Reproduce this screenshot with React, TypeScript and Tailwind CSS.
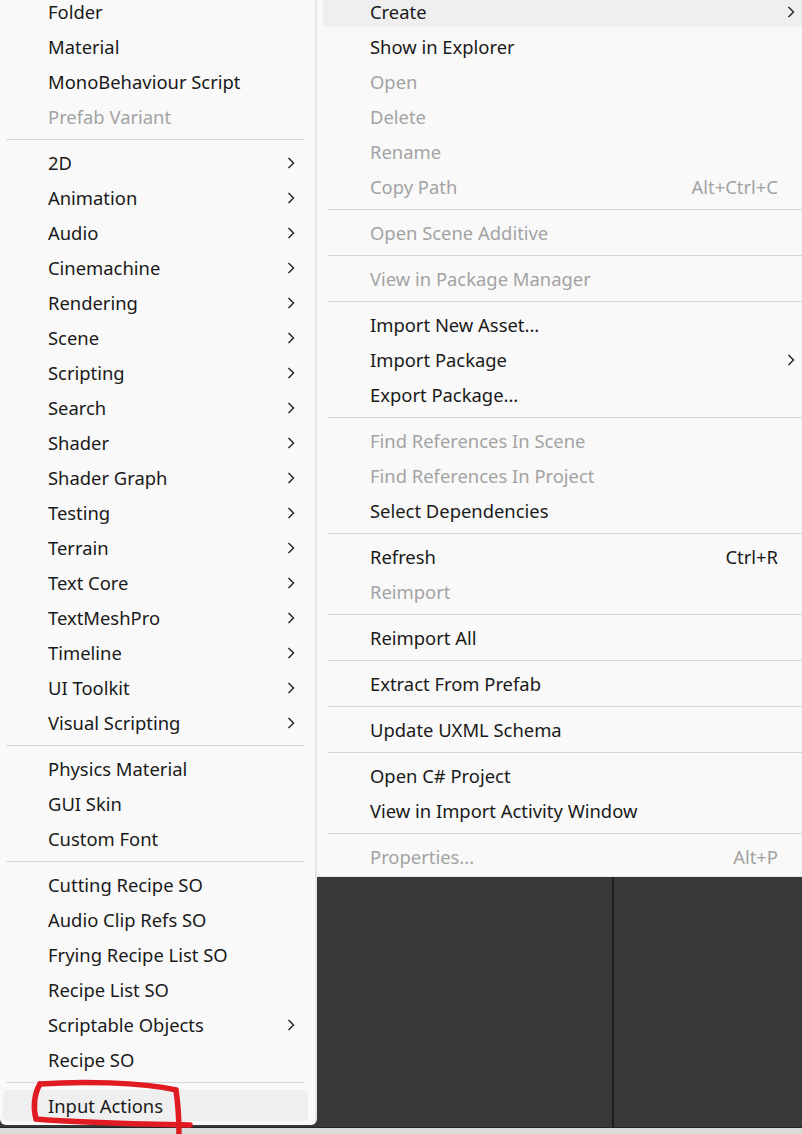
import type { ReactNode } from 'react';

type Item =
  | { sep: true }
  | { label: string; disabled?: boolean; sub?: boolean; shortcut?: string; active?: boolean };

const S: Item = { sep: true };

const LEFT: Item[] = [
  { label: 'Folder' },
  { label: 'Material' },
  { label: 'MonoBehaviour Script' },
  { label: 'Prefab Variant', disabled: true },
  S,
  { label: '2D', sub: true },
  { label: 'Animation', sub: true },
  { label: 'Audio', sub: true },
  { label: 'Cinemachine', sub: true },
  { label: 'Rendering', sub: true },
  { label: 'Scene', sub: true },
  { label: 'Scripting', sub: true },
  { label: 'Search', sub: true },
  { label: 'Shader', sub: true },
  { label: 'Shader Graph', sub: true },
  { label: 'Testing', sub: true },
  { label: 'Terrain', sub: true },
  { label: 'Text Core', sub: true },
  { label: 'TextMeshPro', sub: true },
  { label: 'Timeline', sub: true },
  { label: 'UI Toolkit', sub: true },
  { label: 'Visual Scripting', sub: true },
  S,
  { label: 'Physics Material' },
  { label: 'GUI Skin' },
  { label: 'Custom Font' },
  S,
  { label: 'Cutting Recipe SO' },
  { label: 'Audio Clip Refs SO' },
  { label: 'Frying Recipe List SO' },
  { label: 'Recipe List SO' },
  { label: 'Scriptable Objects', sub: true },
  { label: 'Recipe SO' },
  S,
  { label: 'Input Actions', active: true },
];

const RIGHT: Item[] = [
  { label: 'Create', sub: true, active: true },
  { label: 'Show in Explorer' },
  { label: 'Open', disabled: true },
  { label: 'Delete', disabled: true },
  { label: 'Rename', disabled: true },
  { label: 'Copy Path', disabled: true, shortcut: 'Alt+Ctrl+C' },
  S,
  { label: 'Open Scene Additive', disabled: true },
  S,
  { label: 'View in Package Manager', disabled: true },
  S,
  { label: 'Import New Asset...' },
  { label: 'Import Package', sub: true },
  { label: 'Export Package...' },
  S,
  { label: 'Find References In Scene', disabled: true },
  { label: 'Find References In Project', disabled: true },
  { label: 'Select Dependencies' },
  S,
  { label: 'Refresh', shortcut: 'Ctrl+R' },
  { label: 'Reimport', disabled: true },
  S,
  { label: 'Reimport All' },
  S,
  { label: 'Extract From Prefab' },
  S,
  { label: 'Update UXML Schema' },
  S,
  { label: 'Open C# Project' },
  { label: 'View in Import Activity Window' },
  S,
  { label: 'Properties...', disabled: true, shortcut: 'Alt+P' },
];

function Chevron() {
  return (
    <svg width="10" height="14" viewBox="0 0 10 14" fill="none">
      <path d="M2.5 2 L7.5 7 L2.5 12" stroke="#2a2a2a" strokeWidth="1.5" />
    </svg>
  );
}

function Menu({ items, side }: { items: Item[]; side: 'left' | 'right' }) {
  const left = side === 'left';
  const rows: ReactNode[] = items.map((it, i) => {
    if ('sep' in it) {
      return (
        <div key={i} className={left ? 'flex h-[11px] items-center pl-[6px] pr-[11px]' : 'flex h-[11px] items-center pl-[11px]'}>
          <div className="h-px w-full bg-[#d6d6d6]" />
        </div>
      );
    }
    return (
      <div key={i} className={left ? 'h-[35px] py-[2px] pl-[3px] pr-[7px]' : 'h-[35px] py-[2px] pl-[6px]'}>
        <div
          className={
            (it.active ? 'bg-[#efefef] ' : '') +
            (left ? 'rounded-[5px] pl-[45px] pr-[12px] ' : 'rounded-l-[5px] pl-[47px] ') +
            'flex h-full items-center'
          }
        >
          <span className={'flex-1 whitespace-nowrap ' + (it.disabled ? 'text-[#a3a3a3]' : 'text-[#1a1a1a]')}>
            {it.label}
          </span>
          {it.shortcut && (
            <span className={it.disabled ? 'text-[#a3a3a3]' : 'text-[#1a1a1a]'}>{it.shortcut}</span>
          )}
          {left ? (
            it.sub && <Chevron />
          ) : (
            <span className="flex w-[24px] justify-center pl-[2px]">{it.sub && <Chevron />}</span>
          )}
        </div>
      </div>
    );
  });
  return <div className="-mt-[6px]">{rows}</div>;
}

export default function App() {
  return (
    <div
      className="relative flex h-[1134px] w-[802px] flex-col overflow-hidden bg-[#383838] text-[18.4px]"
      style={{ fontFamily: '"Noto Sans", "Open Sans", sans-serif' }}
    >
      <div className="flex h-[1127px]">
        <div className="h-[1125px] w-[317px] shrink-0 overflow-hidden rounded-b-[6px] border-r-2 border-[#e6e6e6] bg-[#f9f9f9]">
          <Menu items={LEFT} side="left" />
        </div>
        <div className="flex flex-1 flex-col">
          <div className="h-[877px] overflow-hidden border-b border-[#e8e8e8] bg-[#f9f9f9]">
            <Menu items={RIGHT} side="right" />
          </div>
          <div className="flex flex-1">
            <div className="w-[295px] shrink-0" />
            <div className="w-[2px] bg-[#1c1c1c]" />
          </div>
        </div>
      </div>
      <div className="flex-1 border-t border-[#232323] bg-[#dcdcdc]" />

      <svg
        className="pointer-events-none absolute left-0 top-0"
        width="802"
        height="1134"
        viewBox="0 0 802 1134"
        fill="none"
      >
        <path
          d="M40 1084 C 80 1081, 140 1082, 176 1090 C 178 1104, 179 1118, 179 1134"
          stroke="#e11b22"
          strokeWidth="5.5"
          strokeLinecap="round"
        />
        <path
          d="M40 1084 C 34 1094, 33 1108, 36 1119 C 80 1123, 140 1124, 190 1125"
          stroke="#e11b22"
          strokeWidth="5.5"
          strokeLinecap="round"
        />
      </svg>
    </div>
  );
}
